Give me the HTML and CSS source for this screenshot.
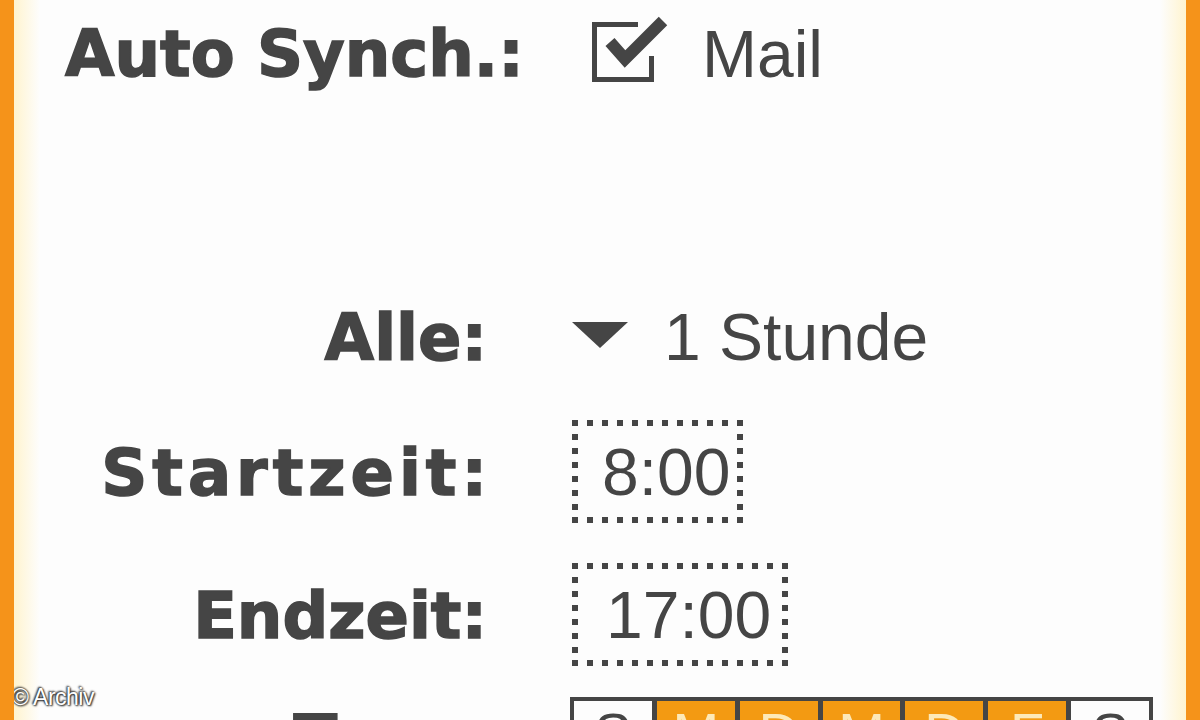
FILE: index.html
```html
<!DOCTYPE html>
<html lang="de">
<head>
<meta charset="utf-8">
<title>Auto Synch.</title>
<link rel="stylesheet" href="styles.css">
</head>
<body>
<div class="frame">
  <div class="screen">
    <div class="row-auto">
      <span class="auto-label">Auto Synch.:</span>
      <svg class="check" width="84" height="72" viewBox="0 0 84 72" aria-hidden="true">
        <path d="M50 12.5 H6.5 V67.5 H63.5 V44" fill="none" stroke="#454545" stroke-width="5"/>
        <path d="M22 30 L37 47 L75 9" fill="none" stroke="#454545" stroke-width="12" stroke-linejoin="miter"/>
      </svg>
      <span class="mail">Mail</span>
    </div>

    <div class="form">
      <div class="row row-alle">
        <span class="label">Alle:</span>
        <span class="value"><span class="tri"></span>1 Stunde</span>
      </div>
      <div class="row row-start">
        <span class="label label-wide">Startzeit:</span>
        <span class="value"><span class="timebox w-start">8:00</span></span>
      </div>
      <div class="row row-end">
        <span class="label">Endzeit:</span>
        <span class="value"><span class="timebox w-end">17:00</span></span>
      </div>
      <div class="row row-tage">
        <span class="label label-tage">Tage:</span>
        <div class="days">
          <span class="day">S</span>
          <span class="day on">M</span>
          <span class="day on">D</span>
          <span class="day on">M</span>
          <span class="day on">D</span>
          <span class="day on">F</span>
          <span class="day">S</span>
        </div>
      </div>
    </div>
  </div>
  <div class="credit">© Archiv</div>
</div>
</body>
</html>
```

FILE: styles.css
```css
html, body {
  margin: 0;
  padding: 0;
  background: #fdfdfd;
}

.frame {
  position: relative;
  width: 1200px;
  height: 720px;
  box-sizing: border-box;
  overflow: hidden;
  border-left: 14px solid #f5931a;
  border-right: 14px solid #f5931a;
  background: linear-gradient(to right, #fff4cf 0, #fdfdfd 26px, #fdfdfd calc(100% - 26px), #fff4cf 100%);
  color: #454545;
}

.screen {
  display: flex;
  flex-direction: column;
}

.row-auto {
  display: flex;
  align-items: flex-start;
  height: 108px;
  padding-left: 51px;
}

.auto-label,
.label {
  font-family: "DejaVu Sans", sans-serif;
  font-weight: bold;
  font-size: 64px;
  line-height: 108px;
  white-space: nowrap;
  -webkit-text-stroke: 1.5px #454545;
}

.auto-label {
  width: 523px;
}

.check {
  margin-top: 12px;
  flex: none;
}

.mail,
.value {
  font-family: "Liberation Sans", Arial, sans-serif;
  font-size: 66px;
  line-height: 102px;
  white-space: nowrap;
}

.mail {
  margin-left: 30px;
  line-height: 108px;
}

.form {
  margin-top: 178px;
  display: flex;
  flex-direction: column;
}

.row {
  display: flex;
  align-items: baseline;
}

.row .label {
  width: 473px;
  text-align: right;
  line-height: 102px;
}

.row .label-wide {
  width: 478px;
  letter-spacing: 5px;
  margin-right: -5px;
}

.row .value {
  margin-left: 85px;
}

.row-alle { height: 134px; }
.row-start { height: 143px; }
.row-end { height: 134px; }

.tri {
  display: inline-block;
  width: 0;
  height: 0;
  border-left: 28px solid transparent;
  border-right: 28px solid transparent;
  border-top: 26px solid #454545;
  margin-right: 36px;
  margin-bottom: 12px;
}

.timebox {
  display: inline-block;
  box-sizing: border-box;
  height: 103px;
  padding-left: 30px;
  padding-top: 2px;
  line-height: 100px;
  background:
    repeating-linear-gradient(90deg, #454545 0 6px, transparent 6px 15px) left top / 100% 6px no-repeat,
    repeating-linear-gradient(90deg, #454545 0 6px, transparent 6px 15px) left bottom / 100% 6px no-repeat,
    repeating-linear-gradient(180deg, #454545 0 6px, transparent 6px 14px) left top / 6px 100% no-repeat,
    repeating-linear-gradient(180deg, #454545 0 6px, transparent 6px 14px) right top / 6px 100% no-repeat;
}

.w-start { width: 171px; }
.w-end { width: 216px; padding-left: 34px; }

.row-tage {
  align-items: flex-start;
}

.row .label-tage {
  line-height: 84px;
}

.days {
  margin-left: 83px;
  width: 583px;
  box-sizing: border-box;
  display: grid;
  grid-template-columns: repeat(7, 1fr);
  gap: 5px;
  background: #454545;
  border: 4px solid #454545;
}

.day {
  height: 60px;
  background: #fdfdfd;
  font-family: "Liberation Sans", Arial, sans-serif;
  font-size: 56px;
  line-height: 64px;
  text-align: center;
  color: #454545;
}

.day.on {
  background: #f39a12;
  color: #fde9b8;
}

.credit {
  position: absolute;
  left: -2px;
  top: 684px;
  font-family: "Liberation Sans", Arial, sans-serif;
  font-size: 23px;
  letter-spacing: -0.5px;
  color: #ffffff;
  text-shadow: 0 0 2px #222, 1px 1px 2px #222, -1px -1px 2px #333;
}
```
